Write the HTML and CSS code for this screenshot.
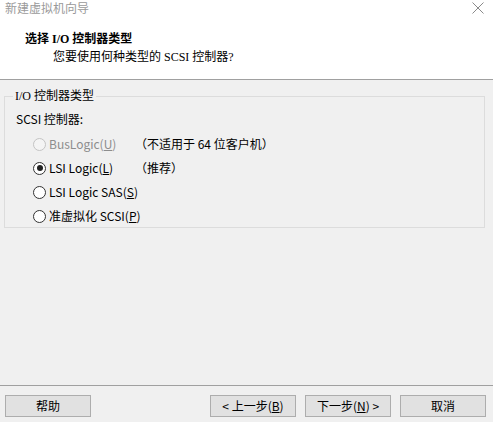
FILE: index.html
```html
<!DOCTYPE html>
<html lang="zh-CN">
<head>
<meta charset="utf-8">
<title>新建虚拟机向导</title>
<link rel="stylesheet" href="styles.css">
</head>
<body>
<div class="window">
  <header class="header">
    <div class="titlebar">
      <span class="wintitle">新建虚拟机向导</span>
      <svg class="close" width="12" height="12" viewBox="0 0 12 12"><path d="M0.5 0.5 L11.5 11.5 M11.5 0.5 L0.5 11.5" stroke="#8a8a8a" stroke-width="1" fill="none"/></svg>
    </div>
    <h1 class="title">选择 I/O 控制器类型</h1>
    <p class="subtitle">您要使用何种类型的 SCSI 控制器?</p>
  </header>
  <main class="main">
    <fieldset class="group">
      <legend class="legend">I/O 控制器类型</legend>
      <div class="caption">SCSI 控制器:</div>
      <div class="row disabled">
        <span class="radio"></span><span class="label">BusLogic(<u>U</u>)</span><span class="note">（不适用于 64 位客户机）</span>
      </div>
      <div class="row">
        <span class="radio checked"></span><span class="label">LSI Logic(<u>L</u>)</span><span class="note">（推荐）</span>
      </div>
      <div class="row">
        <span class="radio"></span><span class="label">LSI Logic SAS(<u>S</u>)</span>
      </div>
      <div class="row">
        <span class="radio"></span><span class="label">准虚拟化 SCSI(<u>P</u>)</span>
      </div>
    </fieldset>
  </main>
  <footer class="footer">
    <button class="btn">帮助</button>
    <span class="spacer"></span>
    <button class="btn">&lt; 上一步(<u>B</u>)</button>
    <button class="btn">下一步(<u>N</u>) &gt;</button>
    <button class="btn">取消</button>
  </footer>
</div>
</body>
</html>
```
FILE: styles.css
```css
html, body {
  margin: 0;
  padding: 0;
}
body {
  width: 493px;
  height: 422px;
  background: #f0f0f0;
  font-family: "Noto Sans CJK SC", "Noto Sans", sans-serif;
  font-size: 12px;
  color: #000;
  overflow: hidden;
}
.window {
  display: flex;
  flex-direction: column;
  height: 422px;
}
.header {
  background: #fff;
  height: 79px;
  border-bottom: 1px solid #a0a0a0;
  box-sizing: content-box;
  display: flex;
  flex-direction: column;
}
.titlebar {
  display: flex;
  justify-content: space-between;
  align-items: flex-start;
  padding: 0 9px 0 5px;
  height: 18px;
}
.wintitle {
  color: #9a9a9a;
  font-size: 12px;
  line-height: 16px;
}
.close {
  margin-top: 2px;
}
.title {
  margin: 13px 0 0 25px;
  font-family: "Liberation Serif", "Noto Sans CJK SC", serif;
  font-weight: bold;
  font-size: 12px;
  line-height: 16px;
}
.subtitle {
  margin: 2px 0 0 53px;
  font-family: "Liberation Serif", "Noto Sans CJK SC", serif;
  font-size: 12px;
  line-height: 16px;
}
.main {
  flex: 1;
  padding: 9px 8px 0 4px;
}
.group {
  margin: 0;
  padding: 0 0 0 10px;
  border: 1px solid #dcdcdc;
  height: 137px;
  box-sizing: content-box;
}
.legend {
  padding: 0 2px;
  margin-left: -2px;
  font-family: "Liberation Serif", "Noto Sans CJK SC", serif;
  font-size: 12px;
  line-height: 14px;
}
.caption {
  margin: 8px 0 0 1px;
  line-height: 16px;
}
.row {
  display: flex;
  align-items: center;
  height: 24px;
  padding-left: 18px;
}
.caption + .row {
  margin-top: 5px;
}
.radio {
  width: 11px;
  height: 11px;
  border: 1px solid #333;
  border-radius: 50%;
  background: #fff;
  display: flex;
  align-items: center;
  justify-content: center;
  margin-right: 3px;
  flex: none;
}
.radio.checked::after {
  content: "";
  width: 6px;
  height: 6px;
  border-radius: 50%;
  background: #222;
}
.label {
  line-height: 16px;
  width: 92px;
  white-space: nowrap;
}
.note {
  line-height: 16px;
  white-space: nowrap;
  margin-left: -6px;
}
.disabled .radio {
  border-color: #c4c4c4;
  background: #f4f4f4;
}
.disabled .label {
  color: #8d8d8d;
}
.footer {
  height: 37px;
  border-top: 1px solid #a0a0a0;
  display: flex;
  align-items: flex-start;
  padding: 9px 7px 0 5px;
  box-sizing: border-box;
  gap: 9px;
}
.spacer {
  flex: 1;
}
.btn {
  width: 86px;
  height: 22px;
  padding: 0;
  background: #e1e1e1;
  border: 1px solid #adadad;
  font-family: "Noto Sans CJK SC", "Noto Sans", sans-serif;
  font-size: 12px;
  line-height: 18px;
  color: #000;
}
```
